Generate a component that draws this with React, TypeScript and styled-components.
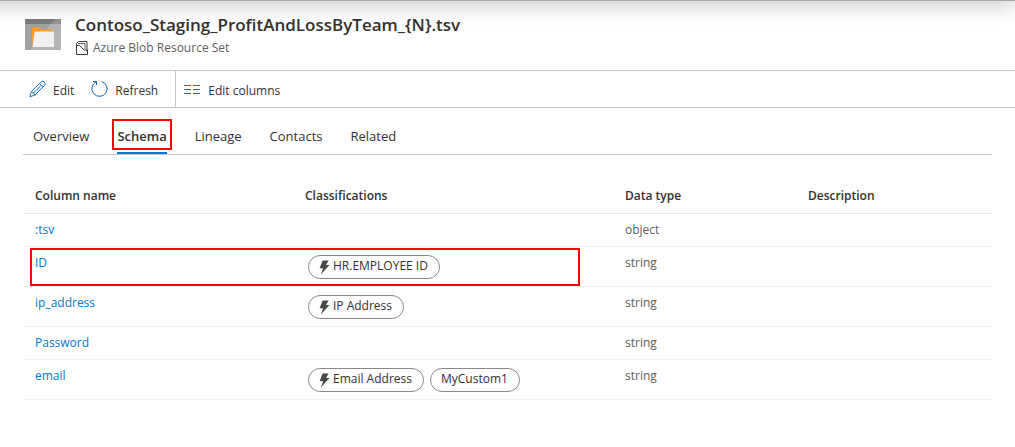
import React from "react";
import styled, { createGlobalStyle } from "styled-components";

const GlobalStyle = createGlobalStyle`
  * { box-sizing: border-box; }
  body {
    margin: 0;
    background: #fff;
    color: #323130;
    font-family: "Open Sans", "Noto Sans", sans-serif;
    font-size: 12px;
    line-height: 16px;
    overflow-x: hidden;
  }
`;

const Page = styled.div`
  position: relative;
  overflow: hidden;
`;

const TopShade = styled.div`
  position: absolute;
  top: -99px;
  left: -40px;
  right: 0;
  height: 100px;
  border-bottom: 1px solid #a8a8a8;
  box-shadow: 0 3px 22px rgba(0, 0, 0, 0.24);
  pointer-events: none;
`;

const Header = styled.header`
  display: flex;
  gap: 14px;
  height: 71px;
  padding: 13px 25px 0;
  border-bottom: 1px solid #c8c6c4;
`;

const AssetIcon = styled.svg`
  flex: none;
  margin-top: 6px;
`;

const Title = styled.h1`
  margin: 0;
  font-size: 17px;
  line-height: 24px;
  font-weight: 600;
`;

const Subtitle = styled.div`
  display: flex;
  align-items: center;
  gap: 4px;
  margin-top: 3px;
  color: #605e5c;
`;

const Toolbar = styled.div`
  display: flex;
  height: 37px;
  padding-left: 24px;
  border-bottom: 1px solid #c8c6c4;
`;

const ToolGroup = styled.div<{ $divided?: boolean }>`
  display: flex;
  padding: ${(p) => (p.$divided ? "0 5px 0 0" : "0 0 0 3px")};
  border-right: ${(p) => (p.$divided ? "1px solid #c8c6c4" : "0")};
`;

const ToolButton = styled.button`
  display: flex;
  align-items: center;
  gap: 7px;
  padding: 0 12px 0 5px;
  border: 0;
  background: none;
  color: inherit;
  font: inherit;
`;

const ToolLabel = styled.span`
  padding-top: 3px;
`;

const Content = styled.main`
  margin: 0 23px;
`;

const Tabs = styled.nav`
  display: flex;
  gap: 18px;
  height: 47px;
  padding: 11px 5px 0;
  border-bottom: 1px solid #c8c6c4;
`;

const Tab = styled.a<{ $active?: boolean }>`
  position: relative;
  height: 35px;
  padding: 9px 5px 0;
  font-size: 13px;
  font-weight: ${(p) => (p.$active ? 600 : 400)};
  color: inherit;
  text-decoration: none;
  &::after {
    content: "";
    display: ${(p) => (p.$active ? "block" : "none")};
    position: absolute;
    left: 5px;
    right: 5px;
    bottom: 0;
    height: 2px;
    background: #0078d4;
  }
`;

const TabMark = styled.span`
  position: absolute;
  inset: 0 0 4px;
  border: 2px solid #f00;
`;

const Table = styled.table`
  width: 100%;
  table-layout: fixed;
  border-collapse: separate;
  border-spacing: 0;
`;

const Col = styled.col<{ $width?: number }>`
  width: ${(p) => (p.$width ? `${p.$width}px` : "auto")};
`;

const HeadCell = styled.th`
  height: 59px;
  padding: 24px 12px 0;
  border-bottom: 1px solid #e6e6e6;
  text-align: left;
  font-weight: 600;
`;

const Cell = styled.td`
  position: relative;
  height: 33px;
  padding: 8px 12px 7px;
  border-bottom: 1px solid #f0f0f0;
  color: #605e5c;
  vertical-align: top;
`;

const ColumnLink = styled.a`
  color: #0078d4;
  text-decoration: none;
`;

const RowMark = styled.span`
  position: absolute;
  z-index: 1;
  top: 1px;
  left: 7px;
  width: 550px;
  height: 38px;
  border: 2px solid #f00;
  pointer-events: none;
`;

const Pills = styled.div`
  display: flex;
  gap: 6px;
  padding-left: 3px;
`;

const Pill = styled.span`
  display: flex;
  height: 24px;
  padding: 2px 11px 4px 10px;
  gap: 3px;
  border: 1px solid #8a8886;
  border-radius: 12px;
  color: #323130;
  white-space: nowrap;
`;

const BoltIcon = () => (
  <svg width="11" height="18" viewBox="0 0 11 18" aria-hidden="true">
    <path d="M3.600 2.500h6L7 7h3.500L1.800 16.500l2.400-6.300H.6z" fill="#4a4948" />
  </svg>
);

const FolderAssetIcon = () => (
  <AssetIcon width="36" height="31" viewBox="0 0 36 31" aria-hidden="true">
    <rect width="36" height="31" rx="1" fill="#a0a1a2" />
    <path d="M30 0h5a1 1 0 0 1 1 1v29a1 1 0 0 1-1 1H5z" fill="#b3b4b5" />
    <path d="M0 5V1a1 1 0 0 1 1-1h34a1 1 0 0 1 1 1v4z" fill="#7a7a7a" />
    <path d="M30 0h5a1 1 0 0 1 1 1v4H26z" fill="#949494" />
    <path d="M7 28V9a.7.7 0 0 1 .7-.7h6.800l1.600 2.200h11a.7.7 0 0 1 .7.7V13H9.500z" fill="#ff9a1f" />
    <path d="M9.500 12.500H29V28H7.500z" fill="#f0f0f0" />
  </AssetIcon>
);

const ResourceSetIcon = () => (
  <svg width="14" height="14" viewBox="0 0 14 14" fill="none" stroke="#3b3a39" aria-hidden="true">
    <path d="M1.500 4.500v-2l2-2h8.500v10" />
    <path d="M3 2.500h7v5.500" strokeWidth=".8" />
    <path d="M1.500 4.500h3l4.500 4.500h3.500v4.500h-11z" />
  </svg>
);

const PencilIcon = () => (
  <svg width="17" height="18" viewBox="0 0 17 18" fill="none" stroke="#2470c8" aria-hidden="true">
    <path d="M.8 16.700l1.500-5L11.900 2.100a2.300 2.300 0 0 1 3.500 3.500L5.800 15.200zM2.300 11.700q3 .5 3.500 3.500M10.400 3.600l3.500 3.500M4.300 13.200l7.800-7.800" />
  </svg>
);

const RefreshIcon = () => (
  <svg width="17" height="18" viewBox="0 0 17 18" fill="none" stroke="#0f6cbd" aria-hidden="true">
    <path d="M10.800 1.500a7.600 7.600 0 1 1-5.600.4M2 1.500h3.500v3.500" />
  </svg>
);

const ColumnsIcon = () => (
  <svg width="17" height="12" viewBox="0 0 17 12" stroke="#0078d4" aria-hidden="true">
    <path d="M0 2.500h7M9 2.500h7M0 6.500h7M9 6.500h7M0 10.500h7M9 10.500h7" />
  </svg>
);

type Classification = { label: string; system?: boolean };
type Row = { name: string; type: string; tags: Classification[]; marked?: boolean };

const rows: Row[] = [
  { name: ":tsv", type: "object", tags: [] },
  { name: "ID", type: "string", tags: [{ label: "HR.EMPLOYEE ID", system: true }], marked: true },
  { name: "ip_address", type: "string", tags: [{ label: "IP Address", system: true }] },
  { name: "Password", type: "string", tags: [] },
  { name: "email", type: "string", tags: [{ label: "Email Address", system: true }, { label: "MyCustom1" }] },
];

const tabs = ["Overview", "Schema", "Lineage", "Contacts", "Related"];

export default function App() {
  return (
    <Page>
      <GlobalStyle />
      <TopShade />
      <Header>
        <FolderAssetIcon />
        <div>
          <Title>Contoso_Staging_ProfitAndLossByTeam_&#123;N&#125;.tsv</Title>
          <Subtitle>
            <ResourceSetIcon />
            Azure Blob Resource Set
          </Subtitle>
        </div>
      </Header>
      <Toolbar>
        <ToolGroup $divided>
          <ToolButton type="button"><PencilIcon /><ToolLabel>Edit</ToolLabel></ToolButton>
          <ToolButton type="button"><RefreshIcon /><ToolLabel>Refresh</ToolLabel></ToolButton>
        </ToolGroup>
        <ToolGroup>
          <ToolButton type="button"><ColumnsIcon /><ToolLabel>Edit columns</ToolLabel></ToolButton>
        </ToolGroup>
      </Toolbar>
      <Content>
        <Tabs>
          {tabs.map((t) => (
            <Tab key={t} href={`#${t.toLowerCase()}`} $active={t === "Schema"}>
              {t}
              {t === "Schema" && <TabMark />}
            </Tab>
          ))}
        </Tabs>
        <Table>
          <colgroup>
            <Col $width={270} />
            <Col $width={320} />
            <Col $width={183} />
            <Col />
          </colgroup>
          <thead>
            <tr>
              <HeadCell scope="col">Column name</HeadCell>
              <HeadCell scope="col">Classifications</HeadCell>
              <HeadCell scope="col">Data type</HeadCell>
              <HeadCell scope="col">Description</HeadCell>
            </tr>
          </thead>
          <tbody>
            {rows.map((r) => (
              <tr key={r.name}>
                <Cell>
                  <ColumnLink href="#column">{r.name}</ColumnLink>
                  {r.marked && <RowMark />}
                </Cell>
                <Cell>
                  {r.tags.length > 0 && (
                    <Pills>
                      {r.tags.map((c) => (
                        <Pill key={c.label}>
                          {c.system && <BoltIcon />}
                          {c.label}
                        </Pill>
                      ))}
                    </Pills>
                  )}
                </Cell>
                <Cell>{r.type}</Cell>
                <Cell />
              </tr>
            ))}
          </tbody>
        </Table>
      </Content>
    </Page>
  );
}
